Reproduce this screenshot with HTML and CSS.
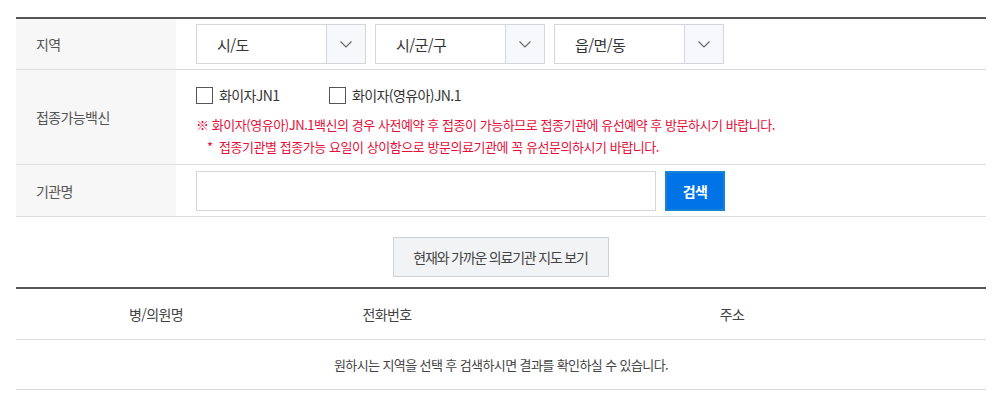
FILE: index.html
```html
<!DOCTYPE html>
<html lang="ko">
<head>
<meta charset="utf-8">
<link rel="stylesheet" href="styles.css">
</head>
<body>
<div class="wrap">
  <div class="form">
    <div class="row">
      <div class="label">지역</div>
      <div class="field selects">
        <div class="select"><span class="sel-text">시/도</span><span class="sel-arrow"><svg width="12" height="7" viewBox="0 0 12 7"><path d="M0.5 0.5 L6 6 L11.5 0.5" fill="none" stroke="#666" stroke-width="1.1"/></svg></span></div>
        <div class="select"><span class="sel-text">시/군/구</span><span class="sel-arrow"><svg width="12" height="7" viewBox="0 0 12 7"><path d="M0.5 0.5 L6 6 L11.5 0.5" fill="none" stroke="#666" stroke-width="1.1"/></svg></span></div>
        <div class="select"><span class="sel-text">읍/면/동</span><span class="sel-arrow"><svg width="12" height="7" viewBox="0 0 12 7"><path d="M0.5 0.5 L6 6 L11.5 0.5" fill="none" stroke="#666" stroke-width="1.1"/></svg></span></div>
      </div>
    </div>
    <div class="row row-vaccine">
      <div class="label">접종가능백신</div>
      <div class="field vaccine">
        <div class="checks">
          <label class="check"><span class="box"></span>화이자JN1</label>
          <label class="check"><span class="box"></span>화이자(영유아)JN.1</label>
        </div>
        <p class="notice">※ 화이자(영유아)JN.1백신의 경우 사전예약 후 접종이 가능하므로 접종기관에 유선예약 후 방문하시기 바랍니다.</p>
        <p class="notice indent">*&nbsp; 접종기관별 접종가능 요일이 상이함으로 방문의료기관에 꼭 유선문의하시기 바랍니다.</p>
      </div>
    </div>
    <div class="row row-name">
      <div class="label">기관명</div>
      <div class="field search">
        <div class="input"></div>
        <div class="btn-search">검색</div>
      </div>
    </div>
  </div>
  <div class="map-area">
    <div class="btn-map">현재와 가까운 의료기관 지도 보기</div>
  </div>
  <table class="result">
    <thead>
      <tr><th class="c1">병/의원명</th><th class="c2">전화번호</th><th class="c3">주소</th></tr>
    </thead>
    <tbody>
      <tr><td colspan="3">원하시는 지역을 선택 후 검색하시면 결과를 확인하실 수 있습니다.</td></tr>
    </tbody>
  </table>
</div>
</body>
</html>
```
FILE: styles.css
```css
* { box-sizing: border-box; }
html, body { margin: 0; padding: 0; background: #fff; }
body {
  font-family: "Noto Sans CJK KR", "Noto Sans", sans-serif;
  font-size: 14px;
  color: #333;
  letter-spacing: -0.6px;
}
.wrap {
  width: 970px;
  margin: 17px 0 0 16px;
}
.form {
  border-top: 2px solid #555;
}
.row {
  display: flex;
  border-bottom: 1px solid #ddd;
}
.label {
  width: 160px;
  flex: none;
  background: #f7f7f7;
  padding-left: 20px;
  display: flex;
  align-items: center;
  color: #555;
  font-size: 14px;
}
.field {
  flex: 1;
  padding: 5px 0 5px 20px;
}
.selects {
  display: flex;
  gap: 9px;
  padding-bottom: 5px;
}
.select {
  width: 170px;
  height: 40px;
  border: 1px solid #d4d6dc;
  display: flex;
  background: #fff;
}
.sel-text {
  flex: 1;
  display: flex;
  align-items: center;
  padding-left: 20px;
  color: #333;
  font-size: 15px;
}
.sel-arrow {
  width: 39px;
  border-left: 1px solid #d4d6dc;
  background: #f7f8fb;
  display: flex;
  align-items: center;
  justify-content: center;
}
.row-vaccine .field {
  padding: 14px 0 6px 20px;
}
.checks {
  display: flex;
  height: 22px;
  align-items: center;
  margin-bottom: 8px;
}
.check {
  display: flex;
  align-items: center;
  color: #333;
  font-size: 14px;
  width: 133px;
}
.box {
  width: 17px;
  height: 17px;
  border: 1px solid #555;
  background: #fff;
  margin-right: 6px;
}
.notice {
  margin: 0;
  line-height: 22px;
  color: #e5103a;
  font-size: 13px;
  letter-spacing: -0.45px;
  white-space: nowrap;
}
.notice.indent {
  padding-left: 11px;
}
.row-name .field {
  padding: 6px 0 5px 20px;
}
.search {
  display: flex;
  gap: 9px;
}
.input {
  width: 460px;
  height: 40px;
  border: 1px solid #d4d6dc;
  background: #fff;
}
.btn-search {
  width: 60px;
  height: 40px;
  background: #0073e6;
  border: 2px solid #1684d0;
  color: #fff;
  font-weight: bold;
  font-size: 14px;
  display: flex;
  align-items: center;
  justify-content: center;
}
.map-area {
  display: flex;
  justify-content: center;
  padding: 20px 1px 10px 0;
}
.btn-map {
  width: 216px;
  height: 40px;
  background: #f2f3f5;
  border: 1px solid #cfd0d3;
  color: #444;
  font-size: 14px;
  letter-spacing: -1.2px;
  display: flex;
  align-items: center;
  justify-content: center;
}
.result {
  width: 970px;
  border-collapse: separate;
  border-spacing: 0;
  border-top: 2px solid #555;
  table-layout: fixed;
}
.result th {
  height: 51px;
  font-weight: normal;
  color: #444;
  font-size: 14px;
  border-bottom: 1px solid #ddd;
  padding: 0;
}
.result .c1 { width: 280px; }
.result .c2 { width: 182px; }
.result td {
  height: 50px;
  text-align: center;
  color: #444;
  font-size: 13px;
  border-bottom: 1px solid #ddd;
  padding: 0;
}
```
